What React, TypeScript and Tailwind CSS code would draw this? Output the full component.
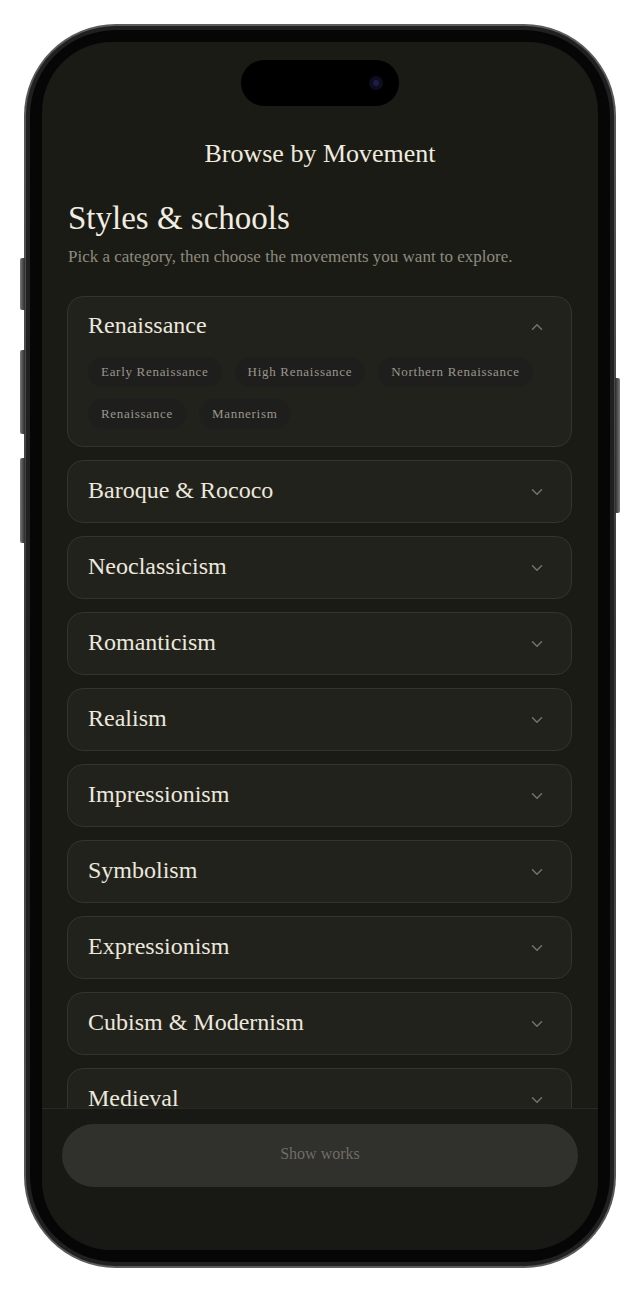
import React from "react";
import { ChevronDown, ChevronUp } from "lucide-react";

const serif = { fontFamily: '"Liberation Serif", "DejaVu Serif", serif' };

const categories = [
  "Baroque & Rococo",
  "Neoclassicism",
  "Romanticism",
  "Realism",
  "Impressionism",
  "Symbolism",
  "Expressionism",
  "Cubism & Modernism",
  "Medieval",
];

const renaissance = [
  "Early Renaissance",
  "High Renaissance",
  "Northern Renaissance",
  "Renaissance",
  "Mannerism",
];

function Chip({ label }: { label: string }) {
  return (
    <span className="flex h-[30px] items-center rounded-full bg-[#1e1e1c] px-[13px] text-[13px] tracking-[0.7px] text-[#9a978c]">
      {label}
    </span>
  );
}

function CollapsedCard({ label }: { label: string }) {
  return (
    <div className="shrink-0 rounded-[16px] border border-[#34342c] bg-[#22221c]">
      <div className="flex h-[61px] items-center justify-between pl-[20px] pr-[25px]">
        <span className="pb-[4px] text-[24px] leading-none text-[#ece8dc]">{label}</span>
        <ChevronDown size={18} strokeWidth={2} className="text-[#74726a]" />
      </div>
    </div>
  );
}

export default function App() {
  return (
    <div className="flex h-[1292px] w-[640px] justify-center bg-white pt-[24px]" style={serif}>
      <div className="relative h-[1244px] w-[592px]">
        {/* side buttons */}
        <div className="absolute left-[-4px] top-[234px] h-[52px] w-[5px] rounded-l-[2px] bg-gradient-to-r from-[#7a7a7a] to-[#2a2a2a]" />
        <div className="absolute left-[-4px] top-[326px] h-[84px] w-[5px] rounded-l-[2px] bg-gradient-to-r from-[#7a7a7a] to-[#2a2a2a]" />
        <div className="absolute left-[-4px] top-[434px] h-[85px] w-[5px] rounded-l-[2px] bg-gradient-to-r from-[#7a7a7a] to-[#2a2a2a]" />
        <div className="absolute right-[-4px] top-[354px] h-[135px] w-[5px] rounded-r-[2px] bg-gradient-to-l from-[#7a7a7a] to-[#2a2a2a]" />

        {/* phone body */}
        <div className="h-full w-full rounded-[92px] bg-gradient-to-b from-[#5c5c5c] via-[#3a3a3a] to-[#5c5c5c] p-[2px]">
          <div className="h-full w-full rounded-[90px] bg-[#202020] p-[4px]">
            <div className="h-full w-full rounded-[86px] bg-[#060606] p-[12px]">
              {/* screen */}
              <div className="flex h-full w-full flex-col overflow-hidden rounded-[70px] bg-[#1b1b15]">
                <div className="flex min-h-0 flex-1 flex-col overflow-hidden">
                  {/* dynamic island */}
                  <div className="flex shrink-0 justify-center pt-[18px]">
                    <div className="relative h-[46px] w-[158px] rounded-full bg-black">
                      <div className="absolute right-[16px] top-[16px] h-[14px] w-[14px] rounded-full bg-[#0d0d1c]">
                        <div className="ml-[4px] mt-[4px] h-[6px] w-[6px] rounded-full bg-[#1c1c4a]" />
                      </div>
                    </div>
                  </div>

                  <h1 className="mt-[32px] shrink-0 text-center text-[26px] leading-[32px] text-[#efebdf]">
                    Browse by Movement
                  </h1>

                  <div className="shrink-0 px-[26px]">
                    <h2 className="mt-[28px] text-[33px] leading-[40px] text-[#f1ede1]">Styles &amp; schools</h2>
                    <p className="mt-[7px] text-[17px] leading-[24px] text-[#8d8b7e]">
                      Pick a category, then choose the movements you want to explore.
                    </p>
                  </div>

                  <div className="mt-[27px] flex flex-col gap-[13px] pl-[25px] pr-[26px]">
                    {/* expanded category */}
                    <div className="shrink-0 rounded-[16px] border border-[#34342c] bg-[#22221c]">
                      <div className="flex h-[60px] items-center justify-between pl-[20px] pr-[25px]">
                        <span className="pb-[4px] text-[24px] leading-none text-[#ece8dc]">Renaissance</span>
                        <ChevronUp size={18} strokeWidth={2} className="text-[#74726a]" />
                      </div>
                      <div className="flex flex-wrap gap-x-[13px] gap-y-[12px] pb-[17px] pl-[20px] pr-[20px]">
                        {renaissance.map((m) => (
                          <Chip key={m} label={m} />
                        ))}
                      </div>
                    </div>

                    {categories.map((c) => (
                      <CollapsedCard key={c} label={c} />
                    ))}
                  </div>
                </div>

                {/* footer */}
                <div className="h-[142px] shrink-0 border-t border-[#2a2a24] bg-[#181814] px-[20px] pt-[15px]">
                  <button className="flex h-[63px] w-full items-center justify-center rounded-full bg-[#30302c] pb-[3px] text-[16px] text-[#6f6d65]">
                    Show works
                  </button>
                </div>
              </div>
            </div>
          </div>
        </div>
      </div>
    </div>
  );
}
